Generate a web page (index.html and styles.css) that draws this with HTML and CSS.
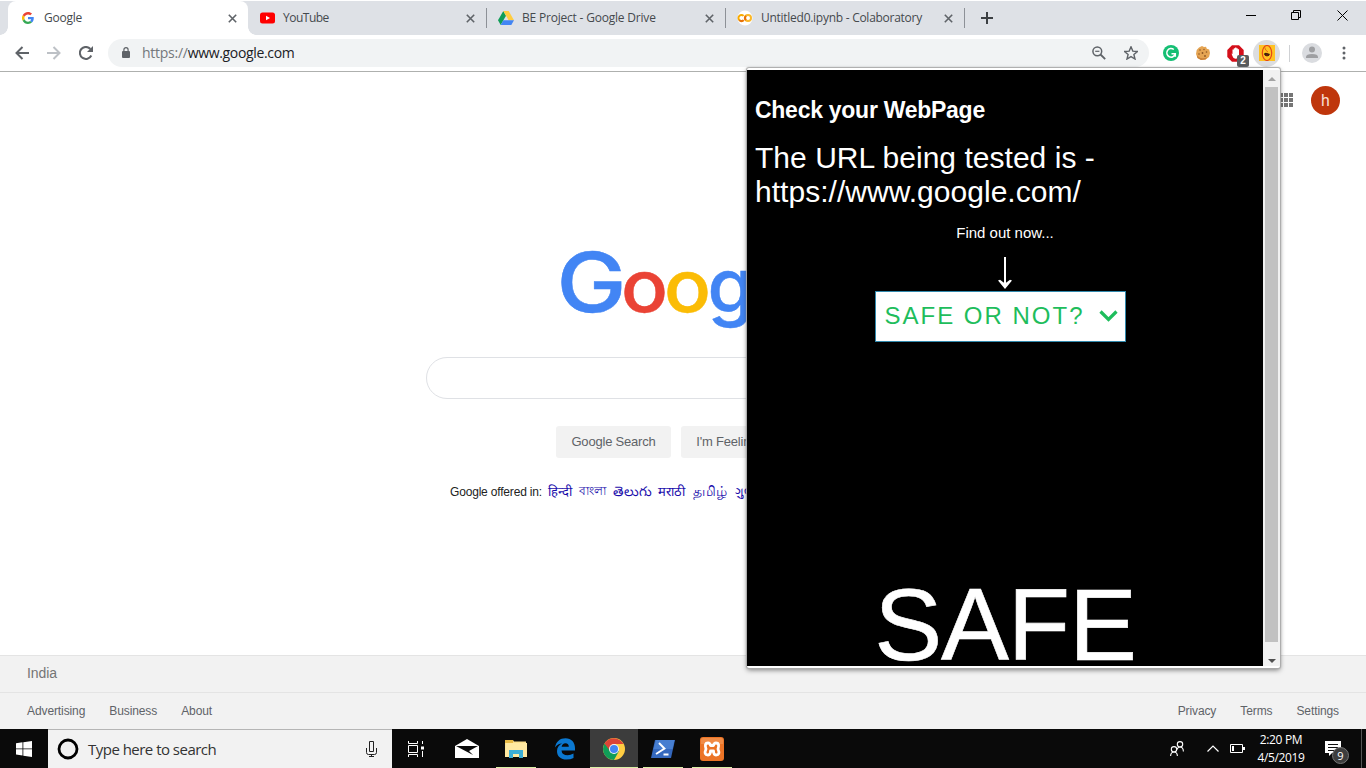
FILE: index.html
```html
<!DOCTYPE html>
<html lang="en">
<head>
<meta charset="utf-8">
<title>Google</title>
<link rel="stylesheet" href="styles.css">
</head>
<body>
<div class="desktop">
  <div class="tabstrip">
    <div class="tab active">
      <svg class="fav" viewBox="0 0 48 48"><path fill="#ea4335" d="M24 9.500c3.500 0 6.700 1.200 9.200 3.600l6.900-6.900C35.900 2.400 30.500 0 24 0 14.600 0 6.500 5.400 2.600 13.200l8 6.200C12.400 13.700 17.700 9.500 24 9.500z"/><path fill="#4285f4" d="M47 24.600c0-1.600-.2-3.100-.4-4.600H24v9h12.900c-.6 3-2.200 5.500-4.700 7.200l7.700 6C44.400 38 47 32 47 24.600z"/><path fill="#fbbc05" d="M10.500 28.600A14.500 14.500 0 0 1 10.500 19.400l-8-6.200a24 24 0 0 0 0 21.600z"/><path fill="#34a853" d="M24 48c6.500 0 11.900-2.100 15.900-5.800l-7.700-6C30 37.700 27.300 38.500 24 38.500c-6.300 0-11.600-4.200-13.500-9.900l-8 6.200C6.500 42.600 14.600 48 24 48z"/></svg>
      <span class="tab-title t1">Google</span>
      <svg class="close" viewBox="0 0 9 9"><path d="M.8.8l7.400 7.400M8.200.8L.8 8.200"/></svg>
    </div>
    <div class="tab">
      <svg class="fav yt" viewBox="0 0 15 12"><rect y="0.500" width="15" height="11" rx="2.500" fill="#f00"/><path fill="#fff" d="M6 3.700v4.600L10 6z"/></svg>
      <span class="tab-title t2">YouTube</span>
      <svg class="close" viewBox="0 0 9 9"><path d="M.8.8l7.400 7.400M8.200.8L.8 8.200"/></svg>
    </div>
    <div class="tab sep">
      <svg class="fav drive" viewBox="0 0 16 14"><path fill="#0f9d58" d="M5.300 0L0 9.300 2.700 14 8 4.700z"/><path fill="#ffcd40" d="M5.300 0h5.400L16 9.300h-5.400z"/><path fill="#4285f4" d="M5.400 9.300H16L13.300 14H2.700z"/></svg>
      <span class="tab-title t3">BE Project - Google Drive</span>
      <svg class="close" viewBox="0 0 9 9"><path d="M.8.8l7.400 7.400M8.200.8L.8 8.200"/></svg>
    </div>
    <div class="tab sep">
      <svg class="fav colab" viewBox="0 0 16 16"><circle cx="8" cy="8" r="7.500" fill="#fff"/><g fill="none" stroke-width="2"><path stroke="#f9ab00" d="M6.600 5.900a3 3 0 1 0 0 4.200"/><circle cx="11" cy="8" r="3" stroke="#fbb829"/><path stroke="#e8710a" d="M6.600 10.100a3 3 0 0 1-4.200 0M8.900 5.900a3 3 0 0 0 0 4.200"/></g></svg>
      <span class="tab-title t4">Untitled0.ipynb - Colaboratory</span>
      <svg class="close" viewBox="0 0 9 9"><path d="M.8.8l7.400 7.400M8.200.8L.8 8.200"/></svg>
    </div>
    <div class="newtab sep"><svg width="12" height="12" viewBox="0 0 12 12"><path d="M6 0v12M0 6h12" stroke="#3c4043" stroke-width="2"/></svg></div>
    <div class="window-buttons">
      <svg width="10" height="11" viewBox="0 0 10 11"><path d="M0 5.500h10"/></svg>
      <svg width="11" height="11" viewBox="0 0 11 11"><path d="M.5 2.500h7v7h-7zM2.500 2.500v-2h7v7h-2"/></svg>
      <svg width="11" height="11" viewBox="0 0 11 11"><path d="M.5.5l10 10M10.500.5l-10 10"/></svg>
    </div>
  </div>

  <div class="toolbar">
    <div class="nav">
      <svg width="14" height="14" viewBox="0 0 14 14"><path d="M14 7H1.500M7.500 1L1.500 7l6 6"/></svg>
      <svg class="dim" width="14" height="14" viewBox="0 0 14 14"><path d="M0 7h12.500M6.500 1l6 6-6 6"/></svg>
      <svg width="14" height="14" viewBox="0 0 14 14"><path d="M12.300 9.500A6 6 0 1 1 11.400 3"/><path d="M14 0v6H8z" fill="#5f6368" stroke="none"/></svg>
    </div>
    <div class="omnibox">
      <svg width="8" height="12" viewBox="0 0 8 12"><rect y="4" width="8" height="7" rx="1" fill="#5f6368"/><path d="M1.900 4.500V2.700a2.100 2.100 0 0 1 4.200 0v1.800" fill="none" stroke="#5f6368" stroke-width="1.200"/></svg>
      <span class="url"><span class="scheme">https://</span>www.google.com</span>
      <svg class="zoom-icon" width="14" height="14" viewBox="0 0 14 14" fill="none" stroke="#5f6368"><circle cx="5.300" cy="5.300" r="4.400" stroke-width="1.500"/><path d="M8.500 8.500l4.700 4.700" stroke-width="1.800"/><path d="M3.200 5.300h4.200" stroke-width="1.200"/></svg>
      <svg width="14" height="14" viewBox="0 0 14 14"><path d="M7 .8l1.800 4.300 4.600.4-3.500 3 1.100 4.500L7 10.600 3 13l1.100-4.500-3.500-3 4.600-.4z" fill="none" stroke="#5f6368" stroke-width="1.400"/></svg>
    </div>
    <div class="extensions">
      <svg width="16" height="16" viewBox="0 0 16 16"><circle cx="8" cy="8" r="8" fill="#15bf74"/><path d="M10.800 4.500A4.300 4.300 0 1 0 12.200 9M8.500 8.700h3.800v3" fill="none" stroke="#fff" stroke-width="1.500"/></svg>
      <svg width="14" height="14" viewBox="0 0 14 14"><path d="M6 0l2 1 2-.2.800 2 2.400.7L14 7l-1 4-3.500 2.500L5 14l-3.500-2L0 8l.7-4L3 1.500z" fill="#e5a452"/><path d="M1 9.500q4 4.500 10.500 1.800L9.500 13.500 5 14l-3.500-2z" fill="#c98038"/><g fill="#8d5523"><circle cx="4" cy="4" r=".8"/><circle cx="8" cy="3.500" r=".7"/><circle cx="6.500" cy="7" r=".9"/><circle cx="10.500" cy="6" r=".8"/><circle cx="3" cy="8" r=".8"/><circle cx="9" cy="10" r=".9"/></g></svg>
      <div class="blocker">
        <svg width="17" height="17" viewBox="0 0 17 17"><path d="M5 .3h7l4.700 4.700v7L12 16.700H5L.3 12V5z" fill="#d40f1a"/><path d="M4.500 8.500l1 .5V4.500h1.300V3.200h1.300v-.7h1.300v.8h1.300v1h1.300v6.200q-.5 3.200-3.600 3.200-2.200 0-3-2.700z" fill="#fff"/></svg>
        <span class="badge">2</span>
      </div>
      <div class="selected-ext"><svg width="16" height="16" viewBox="0 0 16 16"><rect width="16" height="16" fill="#ffc222"/><ellipse cx="8" cy="8" rx="4.700" ry="7.500" fill="none" stroke="#e54818" stroke-width="1.200"/><path d="M5.500 2q1 4 3.500 5" stroke="#e56b18" fill="none"/><path d="M4.800 9q1.500-1.600 3-1l3.200 1-1.300 2H6.500z" fill="#321"/><circle cx="8" cy="10" r="1.400" fill="#641b08"/></svg></div>
      <span class="divider"></span>
      <svg class="profile" width="20" height="20" viewBox="0 0 20 20"><circle cx="10" cy="10" r="10" fill="#dadce0"/><circle cx="10" cy="6.500" r="3" fill="#9e9fa2"/><path d="M4 14q0-3 6-3t6 3v1H4z" fill="#9e9fa2"/></svg>
      <svg class="menu-dots" width="4" height="14" viewBox="0 0 4 14" fill="#5f6368"><circle cx="2" cy="2" r="1.500"/><circle cx="2" cy="7" r="1.500"/><circle cx="2" cy="12" r="1.500"/></svg>
    </div>
  </div>

  <div class="page">
    <div class="page-header">
      <svg width="13" height="14" viewBox="0 0 13 14" fill="#757575"><path d="M0 0h3v4H0zM4 0h4v4H4zM9 0h4v4H9zM0 5h3v4H0zM4 5h4v4H4zM9 5h4v4H9zM0 10h3v4H0zM4 10h4v4H4zM9 10h4v4H9z"/></svg>
      <span class="avatar">h</span>
    </div>
    <div class="search-area">
      <svg class="logo" width="272" height="92" viewBox="0 0 272 92"><g class="wordmark"><text class="cap" x="-2.500" y="62" fill="#4285f4" stroke="#4285f4" textLength="70" lengthAdjust="spacingAndGlyphs">G</text><text x="62" y="62" fill="#ea4335" stroke="#ea4335" textLength="47" lengthAdjust="spacingAndGlyphs">o</text><text x="105" y="62" fill="#fbbc05" stroke="#fbbc05" textLength="47" lengthAdjust="spacingAndGlyphs">o</text><text class="tail" x="148.500" y="62" fill="#4285f4" stroke="#4285f4">g</text></g></svg>
      <div class="searchbox"></div>
      <div class="buttons"><span class="gbtn">Google Search</span><span class="gbtn lucky">I'm Feeling Lucky</span></div>
      <div class="languages"><span class="offered">Google offered in:</span><a class="l1">हिन्दी</a><a class="l2">বাংলা</a><a class="l3">తెలుగు</a><a class="l4">मराठी</a><a class="l5">தமிழ்</a><a class="l6">ગુજરાતી</a></div>
    </div>
    <div class="footer">
      <div class="country">India</div>
      <div class="links"><span>Advertising</span><span>Business</span><span class="grow">About</span><span>Privacy</span><span>Terms</span><span>Settings</span></div>
    </div>
  </div>

  <div class="taskbar">
    <div class="start"><svg width="16" height="16" viewBox="0 0 16 16" fill="#fff"><path d="M0 2.200L6.500 1.300v6.200H0zM7.300 1.200L16 0v7.500H7.300zM0 8.300h6.500v6.200L0 13.600zM7.300 8.300H16V16l-8.700-1.200z"/></svg></div>
    <div class="cortana">
      <svg width="22" height="22" viewBox="0 0 22 22"><circle cx="11" cy="11" r="9" fill="none" stroke="#000" stroke-width="2.800"/></svg>
      <span class="prompt">Type here to search</span>
      <svg width="11" height="16" viewBox="0 0 11 16" fill="none" stroke="#222"><path d="M3.500.5h4v10h-4zM.5 7v4.500q0 2 2 2h6q2 0 2-2V7M5.500 13.500v2M3 15.500h5"/></svg>
    </div>
    <div class="task view"><svg width="18" height="16" viewBox="0 0 18 16" fill="none" stroke="#fff"><path d="M1.500 0v2.500h9V0M1.500 16v-2.500h9V16M1.500 4.500h9v7h-9zM15.500 0v3M15.500 10v6"/><path d="M14 5.500h3v3h-3z" fill="#fff" stroke="none"/></svg></div>
    <div class="task"><svg width="24" height="19" viewBox="0 0 24 19"><path d="M0 7L12 0l12 7v12H0z" fill="#fff"/><path d="M1 7h22l-9 5 4 4L8.500 11z" fill="#0a0a0a"/></svg></div>
    <div class="task open"><svg width="22" height="20" viewBox="0 0 22 20"><path d="M0 1h8l1 1.500h12V18H0z" fill="#fce08d"/><path d="M0 1h8v3H0z" fill="#e8ba45"/><path d="M1 4h21v14H0z" fill="#ffe9a2"/><path d="M4 19v-8h14v8h-4v-4H8v4z" fill="#3caed5"/></svg></div>
    <div class="task"><svg width="20" height="22" viewBox="0 0 20 22"><path d="M0 9.500C1 3.500 5 .2 10.500.2 16.500.2 20 4.500 20 10v2.500H6.500q.4 4.800 6.200 4.800 3 0 5.800-1.700v4.300q-3 1.700-7 1.700C6 21.600 2 18.500 2 13c0-3.500 2-6.300 5-7.600Q2.800 5.500 0 9.500zM6.600 8.700h7.200q0-3.500-3.300-3.500-3.200 0-3.900 3.500z" fill="#0b78d0"/></svg></div>
    <div class="task current"><svg width="22" height="22" viewBox="0 0 22 22"><circle cx="11" cy="11" r="11" fill="#ffcd42"/><path d="M11 11L1.500 5.500A11 11 0 0 0 11 22l5-9z" fill="#109d58"/><path d="M1.500 5.500A11 11 0 0 1 20.500 6H11v5l-4 2z" fill="#db4437"/><circle cx="11" cy="11" r="5" fill="#f5f5f5"/><circle cx="11" cy="11" r="4" fill="#4285f4"/></svg></div>
    <div class="task open"><svg width="24" height="18" viewBox="0 0 24 18"><path d="M4 0h20l-4 18H0z" fill="#3468bd"/><path d="M5 0h18.500l-2 9H2.500z" fill="#477ed0"/><path d="M8 3l5.500 5.500L5 14M12.500 14.500h5" fill="none" stroke="#fff" stroke-width="1.900"/></svg></div>
    <div class="task open"><svg width="24" height="24" viewBox="0 0 24 24"><rect width="24" height="24" rx="3" fill="#ec7426"/><path d="M1 3q0-2 2-2h18q2 0 2 2v4H1z" fill="#f18c46"/><path d="M6 12Q4 6 8 6q2 0 2.500 2.500h3Q14 6 16 6q4 0 2 6 2.500 6-2 6-2.500 0-2.500-4h-3q0 4-2.500 4-4.500 0-2-6z" fill="none" stroke="#fff" stroke-width="2.800" stroke-linejoin="round"/></svg></div>
    <div class="tray">
      <svg class="people" width="14" height="16" viewBox="0 0 14 16" fill="none" stroke="#fff" stroke-width="1.100"><circle cx="10" cy="3.300" r="2.700"/><circle cx="4" cy="8.300" r="2.700"/><path d="M.6 15q.2-4 3.400-4t3.400 4M7 8.500q.8-2.500 3-2.500 3.200 0 3.400 4.500"/></svg>
      <svg class="chev" width="12" height="7" viewBox="0 0 12 7" fill="none" stroke="#fff" stroke-width="1.200"><path d="M.5 6.500L6 1l5.500 5.500"/></svg>
      <svg class="battery" width="15" height="9" viewBox="0 0 15 9"><path d="M.5.5h12v8H.5z" fill="none" stroke="#fff"/><path d="M2 2h2v5H2zM13 3h2v3h-2z" fill="#fff"/></svg>
      <div class="clock"><span class="time">2:20 PM</span><span class="date">4/5/2019</span></div>
      <div class="action"><svg width="16" height="15" viewBox="0 0 16 15"><path d="M0 0h16v12H7l-3 3v-3H0z" fill="#fff"/><path d="M3 3.500h10M3 6.500h10M3 9.500h7" stroke="#111"/></svg><span class="count">9</span></div>
      <span class="show-desktop"></span>
    </div>
  </div>

  <div class="popup">
    <div class="popup-body">
      <h1>Check your WebPage</h1>
      <div class="tested">The URL being tested is - https://www.google.com/</div>
      <div class="find">Find out now...</div>
      <svg class="arrow" width="14" height="32" viewBox="0 0 14 32"><path d="M7 0v30" stroke="#fff" stroke-width="2"/><path d="M0 23.500l2-.8 5 3.800 5-3.800 2 .8L7 32z" fill="#fff"/></svg>
      <div class="check">SAFE OR NOT?<svg width="19" height="12" viewBox="0 0 19 12"><path d="M1.500 1.500l8 8 8-8" fill="none" stroke="#1ebd5c" stroke-width="3.200"/></svg></div>
      <div class="verdict">SAFE</div>
    </div>
    <div class="scrollbar"><span class="up"></span><span class="thumb"></span><span class="down"></span></div>
  </div>
</div>
</body>
</html>
```

FILE: styles.css
```css
* { box-sizing: border-box; }
body { margin: 0; font-family: "Liberation Sans", Arial, sans-serif; overflow: hidden; }
svg { display: block; flex: none; }
.desktop { position: relative; width: 1366px; height: 768px; display: flex; flex-direction: column; background: #fff; overflow: hidden; }

.tabstrip { height: 35px; flex: none; display: flex; background: #dee1e6; border-top: 1px solid #fff; padding-left: 8px; }
.tab { position: relative; width: 239px; height: 34px; display: flex; align-items: center; padding: 0 11px 0 13px; font: 12px "Open Sans", sans-serif; color: #45494d; }
.tab.active { width: 240px; margin-right: -1px; padding-left: 14px; background: #fff; border-radius: 8px 8px 0 0; }
.tab.active::before, .tab.active::after { content: ""; position: absolute; bottom: 0; width: 8px; height: 8px; }
.tab.active::before { left: -8px; background: radial-gradient(circle at 0 0, transparent 7.5px, #fff 8px); }
.tab.active::after { right: -8px; background: radial-gradient(circle at 100% 0, transparent 7.5px, #fff 8px); }
.sep::before { content: ""; position: absolute; left: 0; top: 7px; width: 1px; height: 20px; background: #8d9197; }
.fav { width: 12px; height: 12px; margin-right: 10px; }
.yt { width: 15px; margin-right: 8px; }
.drive { width: 16px; height: 14px; margin-left: -1px; margin-right: 8px; }
.colab { width: 16px; height: 16px; margin-left: -1px; margin-right: 8px; }
.tab-title { flex: 1; white-space: nowrap; line-height: 16px; }
.t1 { letter-spacing: -.25px; }
.t2 { letter-spacing: -.5px; }
.t3 { letter-spacing: -.2px; }
.t4 { letter-spacing: -.27px; }
.close { width: 9px; height: 9px; stroke: #5f6368; stroke-width: 1.600; fill: none; }
.newtab { position: relative; width: 46px; display: flex; align-items: center; padding-left: 17px; }
.window-buttons { margin-left: auto; display: flex; gap: 35px; padding: 9px 18px 0 0; fill: none; stroke: #000; stroke-width: 1; }

.toolbar { height: 37px; flex: none; display: flex; align-items: center; border-bottom: 1px solid #aeb0ae; background: #fff; }
.nav { width: 108px; padding-left: 15px; display: flex; gap: 18px; fill: none; stroke: #5f6368; stroke-width: 2; }
.nav .dim { stroke: #bdc1c6; }
.omnibox { width: 1041px; height: 28px; display: flex; align-items: center; background: #f1f3f4; border-radius: 14px; padding: 0 11px 0 14px; }
.url { flex: 1; padding-left: 12px; font: 14px/20px "Open Sans", sans-serif; letter-spacing: -.34px; color: #202124; }
.scheme { color: #74787c; letter-spacing: -.26px; }
.zoom-icon { margin-right: 18px; }
.extensions { flex: 1; display: flex; align-items: center; padding-left: 14px; }
.extensions > svg:nth-child(2) { margin-left: 17px; }
.blocker { position: relative; margin-left: 17px; }
.badge { position: absolute; left: 10px; top: 10px; width: 12px; height: 12px; border-radius: 2px; background: #5a5c5e; color: #fff; font: bold 10px/12px "Liberation Sans", Arial, sans-serif; text-align: center; }
.selected-ext { width: 27px; height: 27px; margin-left: 9px; border-radius: 50%; background: #dcdddf; display: grid; place-items: center; }
.divider { width: 1px; height: 17px; margin-left: 9px; background: #cfd1d4; }
.profile { margin-left: 12px; }
.menu-dots { margin-left: 20px; }

.page { flex: 1; display: flex; flex-direction: column; min-height: 0; }
.page-header { height: 56px; padding: 0 26px 0 0; display: flex; justify-content: flex-end; align-items: center; gap: 18px; }
.avatar { width: 29px; height: 29px; border-radius: 50%; background: #bf360c; color: #f8ded5; font: 16px/29px Roboto, sans-serif; text-align: center; }
.search-area { flex: 1; display: flex; flex-direction: column; padding-top: 122px; }
.logo { margin-left: 559px; overflow: visible; }
.wordmark { font: 500 72px Inter, sans-serif; stroke-width: .5px; }
.wordmark .cap { font-size: 83px; }
.wordmark .tail { font-size: 75px; }
.searchbox { width: 584px; height: 42px; margin: 15px 0 0 426px; border: 1px solid #dfe1e5; border-radius: 21px; }
.buttons { display: flex; gap: 10px; margin: 27px 0 0 556px; }
.gbtn { height: 32px; width: 115px; border-radius: 3px; background: #f2f2f2; color: #5f6368; font-size: 13px; line-height: 31px; text-align: center; white-space: nowrap; letter-spacing: -.2px; }
.lucky { width: 128px; }
.languages { display: flex; align-items: center; height: 24px; margin: 22px 0 0 450px; font: 12px "Liberation Sans", Arial, sans-serif; color: #222; white-space: nowrap; }
.offered { width: 98px; letter-spacing: -.18px; }
.languages a { color: #1a0dab; }
.languages .l1, .languages .l4 { font-size: 13px; line-height: 16px; }
.l1 { width: 31px; } .l2 { width: 34px; } .l3 { width: 45px; } .l4 { width: 35px; } .l5 { width: 42px; }
.languages .l3, .languages .l5 { font-size: 13.5px; line-height: 16px; }
.footer { height: 74px; background: #f2f2f2; border-top: 1px solid #e4e4e4; color: #5f6368; }
.country { height: 37px; padding-left: 27px; line-height: 34px; font-size: 14px; color: #757575; border-bottom: 1px solid #e4e4e4; letter-spacing: -.1px; }
.links { display: flex; gap: 24px; padding: 0 27px; font-size: 12px; line-height: 36px; letter-spacing: -.1px; }
.grow { flex: 1; }

.taskbar { height: 39px; flex: none; display: flex; background: #0a0a0a; color: #fff; }
.start { width: 48px; display: grid; place-items: center; }
.cortana { width: 344px; background: #f2f2f2; border-top: 1px solid #b5b5b5; display: flex; align-items: center; padding: 0 15px 0 9px; }
.prompt { flex: 1; padding-left: 9px; color: #333; font: 15px "Open Sans", sans-serif; letter-spacing: -.52px; }
.task { width: 48px; display: grid; place-items: center; position: relative; margin-right: 1px; }
.task.view { margin-right: 3px; }
.open::after, .current::after { content: ""; position: absolute; left: 4px; right: 4px; bottom: 0; height: 1px; background: #d9efa5; }
.current { background: #3c3c3c; }
.current::after { left: 0; right: 0; }
.tray { margin-left: auto; display: flex; align-items: center; }
.people { margin-right: 23px; }
.chev { margin-right: 11px; }
.battery { margin-right: 6px; }
.clock { width: 60px; display: flex; flex-direction: column; align-items: center; font: 12px/17px "Open Sans", sans-serif; letter-spacing: -.35px; gap: 1px; white-space: nowrap; }
.action { position: relative; margin-left: 14px; width: 36px; }
.count { position: absolute; left: 7px; top: 6px; width: 17px; height: 17px; border-radius: 50%; background: #3d3d3d; border: 1px solid #777; font: 11px/15px "Open Sans", sans-serif; text-align: center; }
.show-desktop { width: 5px; height: 39px; border-left: 1px solid #555; }

.popup { position: absolute; left: 747px; top: 68px; width: 533px; height: 600px; padding: 2px 0; background: #fff; border-radius: 2px; box-shadow: 0 0 1px 1px #aaa, 0 2px 5px rgba(0,0,0,.5); display: flex; }
.popup-body { width: 516px; height: 596px; background: #000; color: #fff; padding: 0 8px; overflow: hidden; display: flex; flex-direction: column; align-items: center; }
h1 { align-self: stretch; margin: 25px 0 0; font-size: 23px; line-height: 30px; letter-spacing: -.27px; }
.tested { align-self: stretch; margin-top: 16px; font-size: 30px; line-height: 34px; letter-spacing: .03px; }
.find { margin-top: 15px; font-size: 15px; line-height: 17px; }
.arrow { margin-top: 16px; }
.check { width: 251px; height: 51px; margin: 2px 10px 0 0; background: #fff; border: 1px solid #3189ad; color: #1ebd5c; font-size: 24px; line-height: 47px; letter-spacing: 2px; padding: 0 7px 2px 9px; display: flex; align-items: center; justify-content: space-between; white-space: nowrap; }
.verdict { margin-top: 234px; font-size: 102px; line-height: 98px; letter-spacing: -1.2px; -webkit-text-stroke: .6px #fff; }
.scrollbar { width: 17px; background: #f1f1f1; display: flex; flex-direction: column; align-items: center; }
.up { margin: 7px 0 6px; border: 4px solid transparent; border-top: 0; border-bottom: 4px solid #a3a3a3; }
.thumb { width: 13px; height: 555px; background: #c1c1c1; }
.down { margin-top: 17px; border: 4px solid transparent; border-bottom: 0; border-top: 4px solid #505050; }
```
